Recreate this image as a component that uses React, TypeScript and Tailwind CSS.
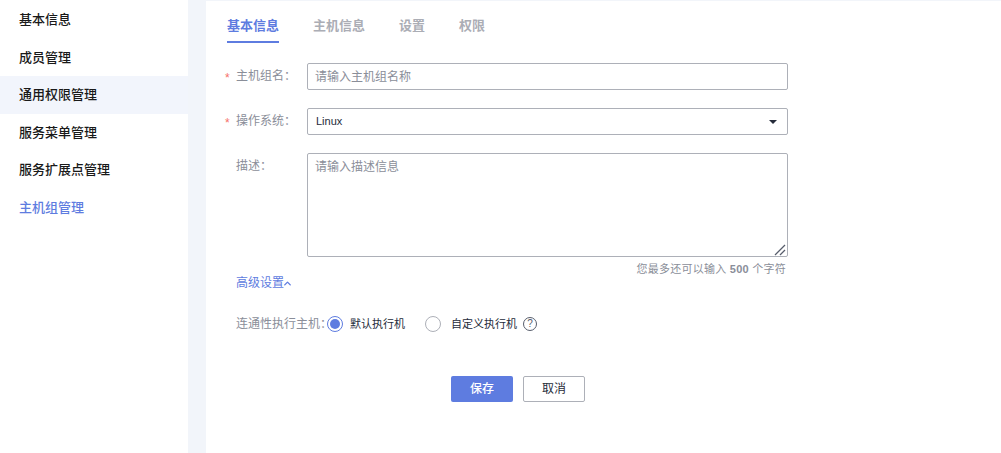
import { ChevronUp } from "lucide-react";

const menus = ["基本信息", "成员管理", "通用权限管理", "服务菜单管理", "服务扩展点管理", "主机组管理"];
const tabs = ["基本信息", "主机信息", "设置", "权限"];

const Label = ({ text, required }: { text: string; required?: boolean }) => (
  <div className="flex h-[27px] w-[82px] shrink-0 text-xs leading-[27px] text-[#8a8e99]">
    <span className="w-[11px] translate-y-[2px] text-[#f66f6a]">{required ? "*" : ""}</span>
    <span>{text}：</span>
  </div>
);

export default function App() {
  return (
    <div className="flex h-[453px] w-[1001px] overflow-hidden bg-[#f2f5fa] font-['Liberation_Sans','Noto_Sans_CJK_SC',sans-serif]">
      <aside className="w-[188px] shrink-0 bg-white pt-px">
        {menus.map((menu, index) => (
          <div
            key={menu}
            className={`flex h-[37.5px] items-center pl-[19px] text-[13px] font-medium ${
              index === 2 ? "bg-[#f2f5fc] text-[#191919]" : index === 5 ? "text-[#5e7ce0]" : "text-[#191919]"
            }`}
          >
            {menu}
          </div>
        ))}
      </aside>

      <main className="mt-px ml-[18px] flex-1 bg-white pl-[19px]">
        <div className="flex h-[42px] gap-[34px] pl-[2px]">
          {tabs.map((tab, index) => (
            <div
              key={tab}
              className={`h-[42px] pt-[15px] text-[13px] leading-5 font-bold ${
                index === 0 ? "border-b-2 border-[#5e7ce0] text-[#5e7ce0]" : "text-[#abadb5]"
              }`}
            >
              {tab}
            </div>
          ))}
        </div>

        <div className="mt-5 flex">
          <Label text="主机组名" required />
          <input
            placeholder="请输入主机组名称"
            className="h-[27px] w-[481px] rounded-[2px] border border-[#adb0b8] px-[7px] text-xs outline-none placeholder:text-[#8a8e99]"
          />
        </div>

        <div className="mt-[18px] flex">
          <Label text="操作系统" required />
          <div className="flex h-[27px] w-[481px] items-center justify-between rounded-[2px] border border-[#adb0b8] pr-[10px] pl-2 text-[11px] text-[#252b3a]">
            <span>Linux</span>
            <span className="h-0 w-0 border-x-[4px] border-t-[4px] border-x-transparent border-t-[#252b3a]" />
          </div>
        </div>

        <div className="mt-[18px] flex">
          <Label text="描述" />
          <div className="relative h-[104px] w-[481px]">
            <textarea
              placeholder="请输入描述信息"
              className="block h-full w-full resize-none rounded-[2px] border border-[#adb0b8] px-[7px] py-[5px] text-xs outline-none placeholder:text-[#8a8e99]"
            />
            <svg className="absolute right-[2px] bottom-[1px] h-3 w-3" viewBox="0 0 12 12" fill="none" stroke="#575d6c" strokeWidth="1.3">
              <path d="M1 11 11 1" />
              <path d="M6 11 11 6" />
            </svg>
          </div>
        </div>

        <div className="mt-[6px] w-[561px] text-right text-[11px] leading-3 tracking-[0.25px] text-[#8a8e99]">
          您最多还可以输入 <b className="font-bold">500</b> 个字符
        </div>

        <div className="flex items-center pl-[11px] text-xs leading-4 text-[#5e7ce0]">
          高级设置
          <ChevronUp size={11} strokeWidth={3} className="-ml-[2px]" />
        </div>

        <div className="mt-[23px] flex h-5 items-center pl-[11px] text-xs">
          <span className="w-[91px] shrink-0 whitespace-nowrap text-[#8a8e99]">连通性执行主机：</span>
          <span className="flex h-4 w-4 items-center justify-center rounded-full border border-[#5e7ce0]">
            <span className="h-[10px] w-[10px] rounded-full bg-[#5e7ce0]" />
          </span>
          <span className="ml-[7px] text-[11px] text-[#252b3a]">默认执行机</span>
          <span className="ml-[20px] h-4 w-4 rounded-full border border-[#adb0b8]" />
          <span className="ml-[10px] text-[11px] text-[#252b3a]">自定义执行机</span>
          <span className="ml-[6px] flex h-[14px] w-[14px] items-center justify-center rounded-full border border-[#575d6c] text-[10px] leading-none text-[#575d6c]">
            ?
          </span>
        </div>

        <div className="mt-[42px] ml-[226px] flex gap-[10px]">
          <button className="h-[26px] w-[62px] rounded-[2px] bg-[#5e7ce0] text-xs font-medium text-white">保存</button>
          <button className="h-[26px] w-[62px] rounded-[2px] border border-[#adb0b8] bg-white text-xs text-[#252b3a]">
            取消
          </button>
        </div>
      </main>
    </div>
  );
}
